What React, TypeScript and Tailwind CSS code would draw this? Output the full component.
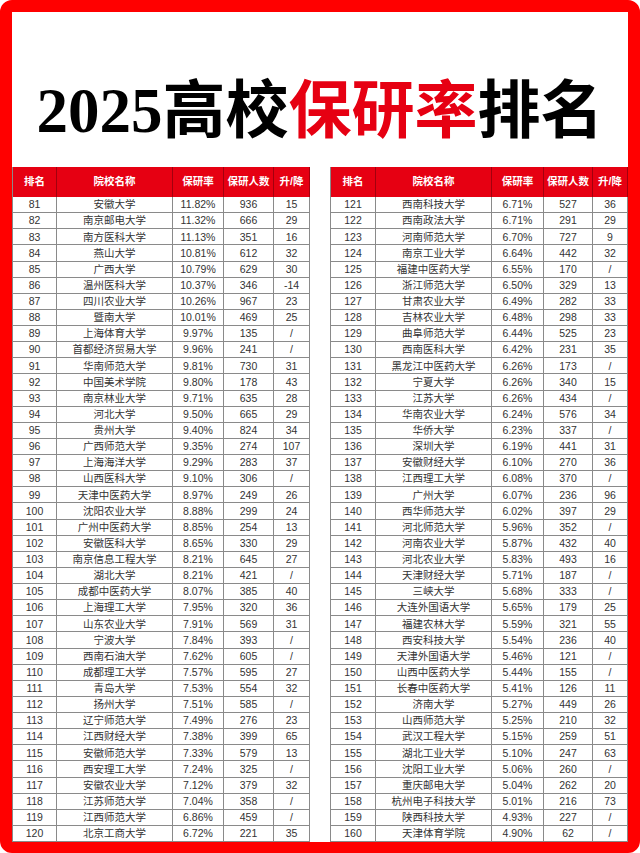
import React from "react";

type Row = [number, string, string, string, string];

const LEFT: Row[] = [
  [81, "安徽大学", "11.82%", "936", "15"],
  [82, "南京邮电大学", "11.32%", "666", "29"],
  [83, "南方医科大学", "11.13%", "351", "16"],
  [84, "燕山大学", "10.81%", "612", "32"],
  [85, "广西大学", "10.79%", "629", "30"],
  [86, "温州医科大学", "10.37%", "346", "-14"],
  [87, "四川农业大学", "10.26%", "967", "23"],
  [88, "暨南大学", "10.01%", "469", "25"],
  [89, "上海体育大学", "9.97%", "135", "/"],
  [90, "首都经济贸易大学", "9.96%", "241", "/"],
  [91, "华南师范大学", "9.81%", "730", "31"],
  [92, "中国美术学院", "9.80%", "178", "43"],
  [93, "南京林业大学", "9.71%", "635", "28"],
  [94, "河北大学", "9.50%", "665", "29"],
  [95, "贵州大学", "9.40%", "824", "34"],
  [96, "广西师范大学", "9.35%", "274", "107"],
  [97, "上海海洋大学", "9.29%", "283", "37"],
  [98, "山西医科大学", "9.10%", "306", "/"],
  [99, "天津中医药大学", "8.97%", "249", "26"],
  [100, "沈阳农业大学", "8.88%", "299", "24"],
  [101, "广州中医药大学", "8.85%", "254", "13"],
  [102, "安徽医科大学", "8.65%", "330", "29"],
  [103, "南京信息工程大学", "8.21%", "645", "27"],
  [104, "湖北大学", "8.21%", "421", "/"],
  [105, "成都中医药大学", "8.07%", "385", "40"],
  [106, "上海理工大学", "7.95%", "320", "36"],
  [107, "山东农业大学", "7.91%", "569", "31"],
  [108, "宁波大学", "7.84%", "393", "/"],
  [109, "西南石油大学", "7.62%", "605", "/"],
  [110, "成都理工大学", "7.57%", "595", "27"],
  [111, "青岛大学", "7.53%", "554", "32"],
  [112, "扬州大学", "7.51%", "585", "/"],
  [113, "辽宁师范大学", "7.49%", "276", "23"],
  [114, "江西财经大学", "7.38%", "399", "65"],
  [115, "安徽师范大学", "7.33%", "579", "13"],
  [116, "西安理工大学", "7.24%", "325", "/"],
  [117, "安徽农业大学", "7.12%", "379", "32"],
  [118, "江苏师范大学", "7.04%", "358", "/"],
  [119, "江西师范大学", "6.86%", "459", "/"],
  [120, "北京工商大学", "6.72%", "221", "35"],
];

const RIGHT: Row[] = [
  [121, "西南科技大学", "6.71%", "527", "36"],
  [122, "西南政法大学", "6.71%", "291", "29"],
  [123, "河南师范大学", "6.70%", "727", "9"],
  [124, "南京工业大学", "6.64%", "442", "32"],
  [125, "福建中医药大学", "6.55%", "170", "/"],
  [126, "浙江师范大学", "6.50%", "329", "13"],
  [127, "甘肃农业大学", "6.49%", "282", "33"],
  [128, "吉林农业大学", "6.48%", "298", "33"],
  [129, "曲阜师范大学", "6.44%", "525", "23"],
  [130, "西南医科大学", "6.42%", "231", "35"],
  [131, "黑龙江中医药大学", "6.26%", "173", "/"],
  [132, "宁夏大学", "6.26%", "340", "15"],
  [133, "江苏大学", "6.26%", "434", "/"],
  [134, "华南农业大学", "6.24%", "576", "34"],
  [135, "华侨大学", "6.23%", "337", "/"],
  [136, "深圳大学", "6.19%", "441", "31"],
  [137, "安徽财经大学", "6.10%", "270", "36"],
  [138, "江西理工大学", "6.08%", "370", "/"],
  [139, "广州大学", "6.07%", "236", "96"],
  [140, "西华师范大学", "6.02%", "397", "29"],
  [141, "河北师范大学", "5.96%", "352", "/"],
  [142, "河南农业大学", "5.87%", "432", "40"],
  [143, "河北农业大学", "5.83%", "493", "16"],
  [144, "天津财经大学", "5.71%", "187", "/"],
  [145, "三峡大学", "5.68%", "333", "/"],
  [146, "大连外国语大学", "5.65%", "179", "25"],
  [147, "福建农林大学", "5.59%", "321", "55"],
  [148, "西安科技大学", "5.54%", "236", "40"],
  [149, "天津外国语大学", "5.46%", "121", "/"],
  [150, "山西中医药大学", "5.44%", "155", "/"],
  [151, "长春中医药大学", "5.41%", "126", "11"],
  [152, "济南大学", "5.27%", "449", "26"],
  [153, "山西师范大学", "5.25%", "210", "32"],
  [154, "武汉工程大学", "5.15%", "259", "51"],
  [155, "湖北工业大学", "5.10%", "247", "63"],
  [156, "沈阳工业大学", "5.06%", "260", "/"],
  [157, "重庆邮电大学", "5.04%", "262", "20"],
  [158, "杭州电子科技大学", "5.01%", "216", "73"],
  [159, "陕西科技大学", "4.93%", "227", "/"],
  [160, "天津体育学院", "4.90%", "62", "/"],
];

const HEADERS = ["排名", "院校名称", "保研率", "保研人数", "升/降"];

function RankTable({ rows, cols }: { rows: Row[]; cols: string }) {
  return (
    <div className="flex flex-col border-l border-[#8a8a8a]">
      <div className={`grid ${cols} h-[30px] bg-[#e60012]`}>
        {HEADERS.map((h) => (
          <div
            key={h}
            className="flex items-center justify-center border-r border-[#a3000d] text-[10.5px] font-bold text-white"
          >
            {h}
          </div>
        ))}
      </div>
      {rows.map((r) => (
        <div key={r[0]} className={`grid ${cols} h-[16.125px] text-[10.5px] leading-none text-[#333]`}>
          {r.map((c, i) => (
            <div
              key={i}
              className="flex items-center justify-center whitespace-nowrap border-r border-b border-[#8a8a8a]"
            >
              {c}
            </div>
          ))}
        </div>
      ))}
    </div>
  );
}

export default function App() {
  return (
    <div
      className="h-[853px] w-[640px] overflow-hidden bg-white"
      style={{ fontFamily: '"Liberation Sans", "Noto Sans CJK SC", sans-serif' }}
    >
      <div className="flex h-[853px] flex-col rounded-[12px] border-[12px] border-b-[11px] border-[#ff0000] bg-white">
        {/* Title */}
        <div className="flex h-[155px] justify-center pt-[68px]">
          <h1
            className="text-[63px] font-bold leading-none tracking-[0px] text-black"
            style={{ fontFamily: '"Liberation Serif", "Noto Sans CJK SC", serif' }}
          >
            2025高校<span className="text-[#e60012]">保研率</span>排名
          </h1>
        </div>

        {/* Tables */}
        <div className="flex gap-[20px]">
          <RankTable rows={LEFT} cols="grid-cols-[44px_116px_51px_50px_36px]" />
          <RankTable rows={RIGHT} cols="grid-cols-[45px_116px_52px_49px_35px]" />
        </div>
      </div>
    </div>
  );
}
